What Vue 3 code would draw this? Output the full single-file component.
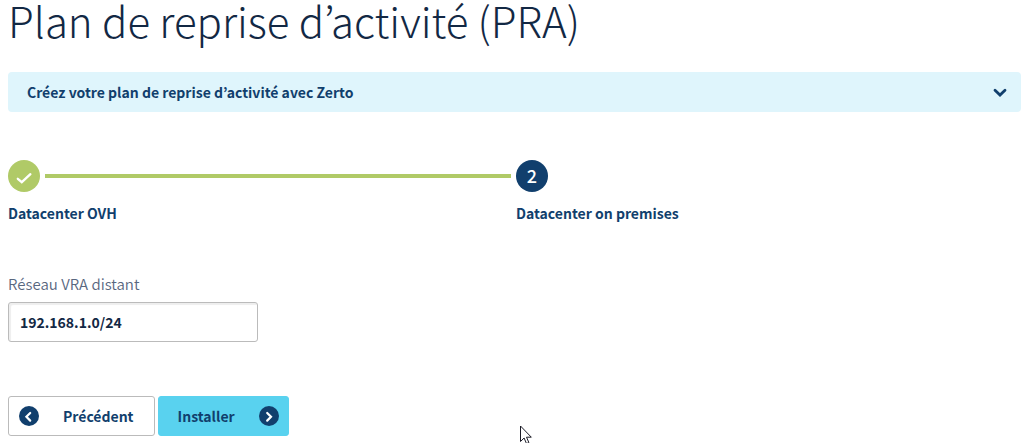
<script setup>
import { ref } from 'vue'

const network = ref('192.168.1.0/24')
</script>

<template>
  <main class="page">
    <h1 class="title">Plan de reprise d’activité (PRA)</h1>

    <button class="banner" type="button" aria-expanded="false">
      <span>Créez votre plan de reprise d’activité avec Zerto</span>
      <svg width="16" height="12" viewBox="0 0 16 12" aria-hidden="true">
        <path d="M3 4.2 L8 9 L13 4.2" fill="none" stroke="#113f6d" stroke-width="2.8" stroke-linecap="round" />
      </svg>
    </button>

    <form class="form" @submit.prevent>
      <ol class="steps">
        <li class="step done">
          <div class="track">
            <span class="bullet">
              <svg width="32" height="32" viewBox="0 0 32 32" role="img" aria-label="Terminé">
                <path d="M9.8 18.8 L13.8 22.2 L22.4 14.2" fill="none" stroke="#fff" stroke-width="2.3" stroke-linecap="round" />
              </svg>
            </span>
            <span class="line"></span>
          </div>
          <span class="name">Datacenter OVH</span>
        </li>
        <li class="step current" aria-current="step">
          <div class="track"><span class="bullet">2</span></div>
          <span class="name">Datacenter on premises</span>
        </li>
      </ol>

      <label class="label" for="network">Réseau VRA distant</label>
      <input id="network" v-model="network" class="field" type="text" />

      <div class="actions">
        <button class="btn back" type="button">
          <svg width="20" height="20" viewBox="0 0 20 20" aria-hidden="true">
            <circle cx="10" cy="10" r="10" fill="#113f6d" />
            <path d="M11.2 7 L7.4 10.8 L11.2 14.6" fill="none" stroke="#fff" stroke-width="2.2" stroke-linecap="round" />
          </svg>
          <span>Précédent</span>
        </button>
        <button class="btn next" type="submit">
          <span>Installer</span>
          <svg width="20" height="20" viewBox="0 0 20 20" aria-hidden="true">
            <circle cx="10" cy="10" r="10" fill="#113f6d" />
            <path d="M8.2 7 L12 10.8 L8.2 14.6" fill="none" stroke="#fff" stroke-width="2.2" stroke-linecap="round" />
          </svg>
        </button>
      </div>
    </form>

    <svg class="cursor" width="13" height="20" viewBox="0 0 13 20" aria-hidden="true">
      <path d="M.5 1 V16.5 L4.1 13 L6.5 18.6 L8.9 17.6 L6.5 12.2 H11.3 Z" fill="#fff" stroke="#1b1b26" stroke-width="1" />
    </svg>
  </main>
</template>

<style>
body {
  background: #fff;
  overflow: hidden;
}
</style>

<style scoped>
.page {
  padding: 0 11px 0 8px;
  font-family: "Noto Sans CJK KR", "Noto Sans", sans-serif;
  font-size: 14px;
  line-height: 20px;
  color: #113f6d;
}

.title {
  margin: 0;
  font-size: 42px;
  font-weight: 200;
  line-height: 40px;
  color: #122844;
}

.banner {
  display: flex;
  align-items: center;
  justify-content: space-between;
  width: 100%;
  height: 40px;
  margin-top: 32px;
  padding: 0 13px 0 19px;
  border: 0;
  border-radius: 4px;
  background: #dff5fc;
  color: inherit;
  font: inherit;
  font-weight: 700;
}

.form {
  margin-top: 48px;
}

.steps {
  display: flex;
  margin: 0 -3px 0 0;
  padding: 0;
  list-style: none;
}

.step {
  flex: 0 0 50%;
  font-weight: 700;
}

.track {
  display: flex;
  align-items: center;
  gap: 5px;
  padding-right: 5px;
  margin-bottom: 11px;
}

.bullet {
  display: flex;
  align-items: center;
  justify-content: center;
  box-sizing: border-box;
  width: 32px;
  height: 32px;
  border-radius: 50%;
  background: #113f6d;
  color: #fff;
  font-size: 18px;
  font-weight: 500;
}

.current .bullet {
  padding-bottom: 2px;
}

.done .bullet {
  background: #b0ca67;
}

.line {
  flex: 1;
  height: 4px;
  background: #b0ca67;
}

.label {
  display: block;
  margin-top: 51px;
  color: #59677f;
  font-size: 15px;
  font-weight: 350;
}

.field {
  display: block;
  box-sizing: border-box;
  width: 250px;
  height: 40px;
  margin-top: 8px;
  padding: 0 11px;
  border: 1px solid #bbb;
  border-radius: 3px;
  box-shadow: inset 2px 2px 1px #eee;
  color: #122844;
  font: inherit;
  font-weight: 700;
}

.actions {
  display: flex;
  gap: 3px;
  margin-top: 54px;
}

.btn {
  display: flex;
  align-items: center;
  gap: 24px;
  height: 40px;
  border: 1px solid #bbb;
  border-radius: 3px;
  background: #fff;
  color: inherit;
  font: inherit;
  font-weight: 700;
}

.back {
  padding: 0 20px 0 10px;
}

.next {
  padding: 0 9px 0 19px;
  border-color: #59d2ef;
  background: #59d2ef;
}

.cursor {
  position: absolute;
  top: 425px;
  left: 520px;
}
</style>
